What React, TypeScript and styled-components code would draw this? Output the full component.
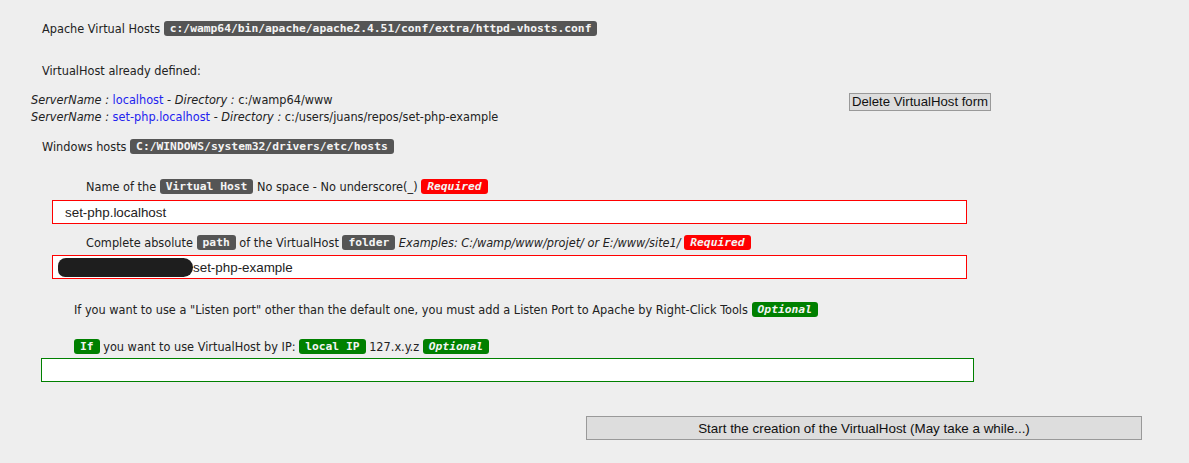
import React from "react";
import styled, { createGlobalStyle, css } from "styled-components";

const Global = createGlobalStyle`
  html, body { margin: 0; padding: 0; background: #eeeeee; }
  body {
    font-family: "DejaVu Sans Condensed", "DejaVu Sans", sans-serif;
    font-size: 12.6px;
    color: #222222;
  }
`;

const Page = styled.div`
  width: 1189px;
  height: 463px;
  box-sizing: border-box;
  padding-top: 19px;
  overflow: hidden;
`;

const Line = styled.div<{ $indent: number; $top: number }>`
  height: 20px;
  line-height: 20px;
  margin-top: ${(p) => p.$top}px;
  padding-left: ${(p) => p.$indent}px;
  white-space: nowrap;
`;

type Tone = "dark" | "red" | "green";
const toneBg: Record<Tone, string> = {
  dark: "#555555",
  red: "#ff0000",
  green: "#008000",
};

const Tag = styled.span<{ $tone: Tone; $italic?: boolean }>`
  display: inline-block;
  vertical-align: middle;
  margin-top: -2px;
  font-family: "DejaVu Sans Mono", "Liberation Mono", monospace;
  font-weight: bold;
  font-size: 11.3px;
  font-style: ${(p) => (p.$italic ? "italic" : "normal")};
  line-height: 15px;
  padding: 0 6px;
  border-radius: 3px;
  color: #f4f4f4;
  background: ${(p) => toneBg[p.$tone]};
`;

const Em = styled.em`
  font-style: italic;
`;

const Link = styled.a`
  color: #2222ee;
  text-decoration: none;
`;

const DefinedRow = styled.div`
  display: flex;
  align-items: flex-start;
  margin-top: 10px;
  padding-left: 31px;
`;

const DefinedList = styled.div`
  width: 818px;
  line-height: 17px;
  white-space: nowrap;
`;

const buttonBase = css`
  font-family: "Liberation Sans", Arial, sans-serif;
  color: #111111;
  background: #dddddd;
  border: 1px solid #999999;
  border-radius: 0;
  box-sizing: border-box;
  cursor: pointer;
`;

const SmallButton = styled.button`
  ${buttonBase}
  margin-top: 2px;
  height: 18px;
  padding: 0 2px;
  font-size: 13.2px;
  line-height: 16px;
`;

const fieldBase = css<{ $tone: Tone; $indent: number; $width: number; $pad: number }>`
  display: flex;
  align-items: center;
  box-sizing: border-box;
  height: 24px;
  width: ${(p) => p.$width}px;
  margin-left: ${(p) => p.$indent}px;
  padding: 0 ${(p) => p.$pad}px;
  border: 1px solid ${(p) => toneBg[p.$tone]};
  background: #ffffff;
  font-family: "Liberation Sans", Arial, sans-serif;
  font-size: 13.4px;
  color: #222222;
  outline: none;
`;

const Field = styled.input<{ $tone: Tone; $indent: number; $width: number; $pad: number; $top: number }>`
  ${fieldBase}
  margin-top: ${(p) => p.$top}px;
`;

const FieldBox = styled.div<{ $tone: Tone; $indent: number; $width: number; $pad: number; $top: number }>`
  ${fieldBase}
  margin-top: ${(p) => p.$top}px;
  white-space: nowrap;
`;

const Redaction = styled.span`
  display: inline-block;
  width: 135px;
  height: 19px;
  background: #1e1e1e;
  border-radius: 10px 12px 12px 9px;
`;

const ActionRow = styled.div`
  margin-top: 34px;
  padding-left: 586px;
`;

const BigButton = styled.button`
  ${buttonBase}
  width: 556px;
  height: 24px;
  font-size: 13.4px;
  padding: 0;
`;

export default function App() {
  return (
    <>
      <Global />
      <Page>
        <Line $indent={42} $top={0}>
          Apache Virtual Hosts{" "}
          <Tag $tone="dark">c:/wamp64/bin/apache/apache2.4.51/conf/extra/httpd-vhosts.conf</Tag>
        </Line>

        <Line $indent={42} $top={22}>
          VirtualHost already defined:
        </Line>

        <DefinedRow>
          <DefinedList>
            <div>
              <Em>ServerName :</Em> <Link href="#">localhost</Link> - <Em>Directory :</Em> c:/wamp64/www
            </div>
            <div>
              <Em>ServerName :</Em> <Link href="#">set-php.localhost</Link> - <Em>Directory :</Em>{" "}
              c:/users/juans/repos/set-php-example
            </div>
          </DefinedList>
          <SmallButton type="button">Delete VirtualHost form</SmallButton>
        </DefinedRow>

        <Line $indent={42} $top={12}>
          Windows hosts <Tag $tone="dark">C:/WINDOWS/system32/drivers/etc/hosts</Tag>
        </Line>

        <Line $indent={86} $top={20}>
          Name of the <Tag $tone="dark">Virtual Host</Tag> No space - No underscore(_){" "}
          <Tag $tone="red" $italic>
            Required
          </Tag>
        </Line>
        <Field
          $tone="red"
          $indent={52}
          $width={915}
          $pad={12}
          $top={3}
          defaultValue="set-php.localhost"
        />

        <Line $indent={86} $top={9}>
          Complete absolute <Tag $tone="dark">path</Tag> of the VirtualHost <Tag $tone="dark">folder</Tag>{" "}
          <Em>Examples: C:/wamp/www/projet/ or E:/www/site1/</Em>{" "}
          <Tag $tone="red" $italic>
            Required
          </Tag>
        </Line>
        <FieldBox $tone="red" $indent={52} $width={915} $pad={5} $top={2}>
          <Redaction />
          set-php-example
        </FieldBox>

        <Line $indent={74} $top={21}>
          If you want to use a "Listen port" other than the default one, you must add a Listen Port to Apache by
          Right-Click Tools{" "}
          <Tag $tone="green" $italic>
            Optional
          </Tag>
        </Line>

        <Line $indent={74} $top={17}>
          <Tag $tone="green">If</Tag> you want to use VirtualHost by IP: <Tag $tone="green">local IP</Tag> 127.x.y.z{" "}
          <Tag $tone="green" $italic>
            Optional
          </Tag>
        </Line>
        <Field $tone="green" $indent={41} $width={933} $pad={12} $top={1} defaultValue="" />

        <ActionRow>
          <BigButton type="button">Start the creation of the VirtualHost (May take a while...)</BigButton>
        </ActionRow>
      </Page>
    </>
  );
}
